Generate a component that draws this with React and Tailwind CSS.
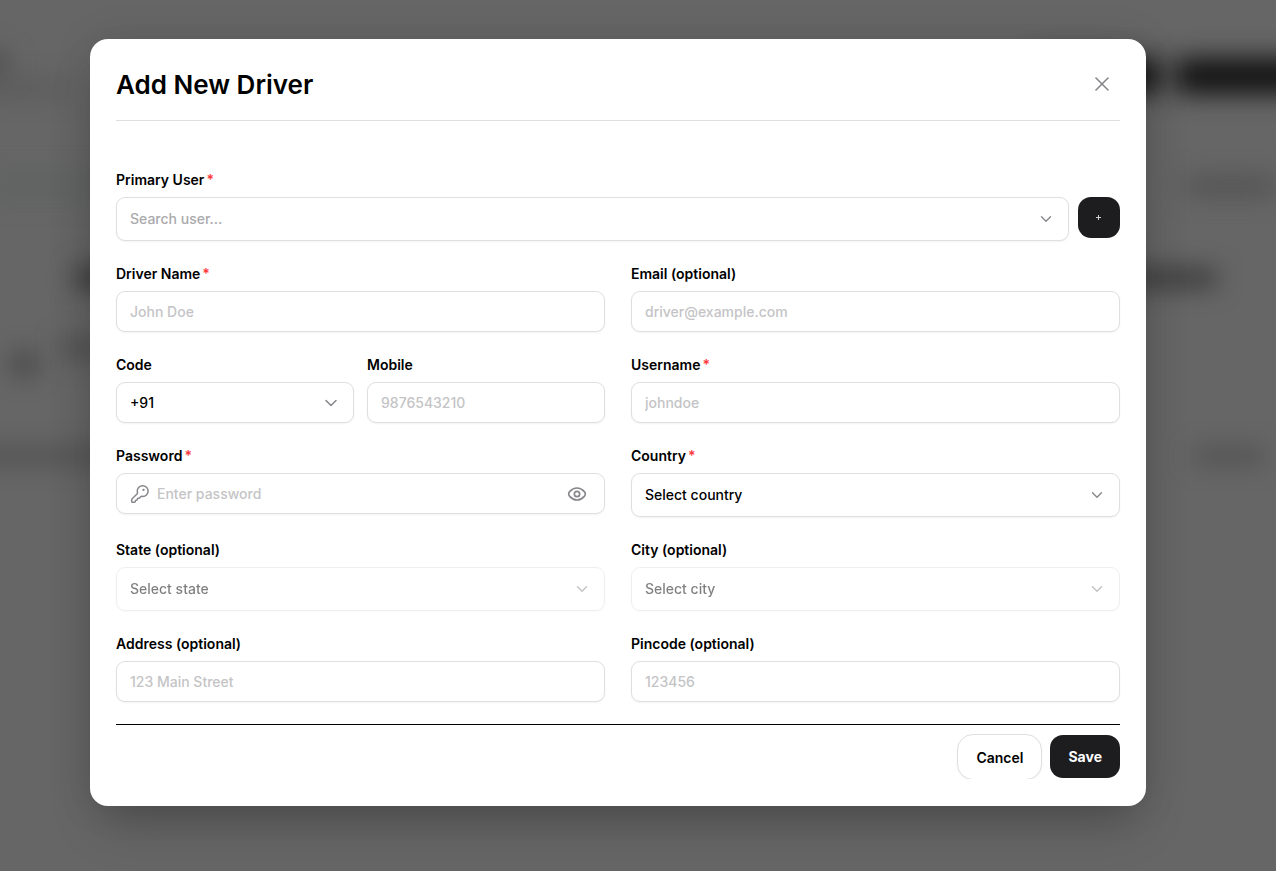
import React, { useState } from 'react';
import { ChevronDown, X } from 'lucide-react';

const inputClass =
  'w-full h-[41px] px-[13px] rounded-[9px] border border-[#dfdfe1] bg-white text-[14px] font-medium text-black placeholder:text-[#c4c4c6] shadow-[0_1px_2px_rgba(0,0,0,0.05)] outline-none';

const KeyIcon = () => (
  <svg viewBox="0 0 24 24" fill="none" stroke="currentColor" strokeWidth="1.8" strokeLinecap="round" strokeLinejoin="round" className="w-5 h-5">
    <path d="M15.2 15a6.500 6.500 0 1 0-6.500-6.500c0 .7.1 1.200.300 1.800.2.600.1 1-.300 1.400L2.900 17.500c-.6.6-.9 1.200-.9 2V21c0 .6.400 1 1 1h2.200c.7 0 1.200-.5 1.200-1.200v-.3c0-.5.4-.9.9-.9h.3c.7 0 1.200-.5 1.200-1.200v-.3c0-.5.4-.9.9-.9h.4c.5 0 .9-.2 1.200-.5l1.500-1.500c.4-.4.8-.5 1.300-.4.3.1.7.2 1.100.2Z" />
    <circle cx="16.200" cy="7" r="1.400" fill="currentColor" stroke="none" />
  </svg>
);

const EyeIcon = () => (
  <svg viewBox="0 0 24 24" fill="none" stroke="currentColor" strokeWidth="2" strokeLinejoin="round" className="w-5 h-5">
    <path d="M2 12c0-1.400.5-2.100 1.500-3.200C5.300 6.800 8.200 4.800 12 4.800s6.700 2 8.500 4c1 1.100 1.500 1.800 1.500 3.200s-.5 2.100-1.500 3.200c-1.800 2-4.700 4-8.500 4s-6.700-2-8.500-4C2.500 14.100 2 13.400 2 12Z" />
    <circle cx="12" cy="12" r="3.200" />
  </svg>
);

const Field = ({ id, label, required, children }) => (
  <div>
    <label htmlFor={id} className="flex gap-0.5 mb-[7px] text-[14px] leading-5 font-semibold text-black">
      {label}
      {required && <span className="text-[#ff383c]">*</span>}
    </label>
    {children}
  </div>
);

const TextInput = ({ id, ...props }) => <input id={id} type="text" className={inputClass} {...props} />;

const Select = ({ id, options, disabled, compact }) => (
  <div className={`relative ${disabled ? 'opacity-50' : ''}`}>
    <select
      id={id}
      disabled={disabled}
      className={`w-full px-[13px] appearance-none rounded-[9px] border border-[#dfdfe1] bg-white text-[14px] font-medium text-black opacity-100 shadow-[0_1px_2px_rgba(0,0,0,0.05)] outline-none ${compact ? 'h-[41px]' : 'h-[44px] pb-0.5'}`}
    >
      {options.map((option) => (
        <option key={option}>{option}</option>
      ))}
    </select>
    <span className="absolute inset-y-0 right-[13px] w-5 flex items-center justify-center text-[#86868b] pointer-events-none">
      <ChevronDown className={compact ? 'w-5 h-5' : 'w-[18px] h-[18px]'} strokeWidth={1.8} />
    </span>
  </div>
);

// Blurred page content that shows through the overlay
const Backdrop = () => (
  <div aria-hidden="true" className="absolute inset-0 overflow-hidden bg-[#666666]">
    <div className="absolute -left-10 top-[52px] w-[46px] h-6 bg-[#4c4c4c] blur-[13px]" />
    <div className="absolute -left-5 top-[84px] w-[90px] h-2 bg-[#505050] blur-[13px]" />
    <div className="absolute right-[114px] top-[58px] w-[130px] h-[36px] rounded-xl bg-[#121212] blur-[13px]" />
    <div className="absolute -right-10 top-[58px] w-[142px] h-[36px] rounded-xl bg-[#121212] blur-[13px]" />
    <div className="absolute -left-5 top-[176px] w-[120px] h-5 bg-[#5f6161] blur-[13px]" />
    <div className="absolute right-0 top-[178px] w-[90px] h-4 bg-[#4e4e4e] blur-[13px]" />
    <div className="absolute left-[76px] top-[268px] w-[60px] h-5 bg-[#303030] blur-[13px]" />
    <div className="absolute right-[60px] top-[270px] w-[90px] h-4 bg-[#303030] blur-[13px]" />
    <div className="absolute left-[14px] top-[354px] w-5 h-5 bg-[#383838] blur-[13px]" />
    <div className="absolute left-[62px] top-[340px] w-[40px] h-4 bg-[#484848] blur-[13px]" />
    <div className="absolute -left-5 top-[450px] w-[130px] h-3 bg-[#484848] blur-[13px]" />
    <div className="absolute right-[12px] top-[450px] w-[70px] h-3 bg-[#484848] blur-[13px]" />
  </div>
);

const App = () => {
  const [showPassword, setShowPassword] = useState(false);

  return (
    <div className="relative min-h-screen pt-[39px] pb-[65px] pl-[90px] pr-[130px] font-['Inter',sans-serif]">
      <Backdrop />

      <div role="dialog" aria-labelledby="dialog-title" className="relative w-full p-[26px] rounded-[18px] bg-white shadow-[0_25px_50px_-12px_rgba(0,0,0,0.25),0_0_40px_rgba(0,0,0,0.1)]">
        {/* Header */}
        <div className="flex items-start justify-between pb-4 border-b border-[#dfdfe1]">
          <h2 id="dialog-title" className="text-[26px] leading-[39px] font-semibold text-black">Add New Driver</h2>
          <button type="button" aria-label="Close" className="w-9 h-[38px] flex items-center justify-center text-[#86868b]">
            <X className="w-6 h-6" strokeWidth={1.6} />
          </button>
        </div>

        <form onSubmit={(e) => e.preventDefault()} className="pb-px">
          <div className="grid grid-cols-2 gap-x-[26px] gap-y-[23px] pt-[49px] pb-[22px]">
            {/* Primary User */}
            <div className="col-span-2">
              <Field id="user" label="Primary User" required>
                <div className="flex items-start gap-[9px]">
                  <div className="relative flex-1">
                    <input
                      id="user"
                      type="text"
                      placeholder="Search user..."
                      className="w-full h-[44px] px-[13px] pb-0.5 rounded-[9px] border border-[#dfdfe1] bg-white text-[14px] font-medium text-black placeholder:text-[#aaaaad] shadow-[0_1px_2px_rgba(0,0,0,0.05)] outline-none"
                    />
                    <span className="absolute inset-y-0 right-[13px] w-5 flex items-center justify-center text-[#86868b] pointer-events-none">
                      <ChevronDown className="w-[18px] h-[18px]" strokeWidth={1.8} />
                    </span>
                  </div>
                  <button type="button" aria-label="Add user" className="w-[42px] h-[41px] flex items-center justify-center rounded-[13px] bg-[#1d1d1f] text-[#d0d0d0]">
                    <svg viewBox="0 0 6 7" stroke="currentColor" strokeWidth="1" className="w-[6px] h-[7px]">
                      <path d="M2.500 1v5M0 3.500h5" />
                    </svg>
                  </button>
                </div>
              </Field>
            </div>

            <Field id="name" label="Driver Name" required>
              <TextInput id="name" placeholder="John Doe" />
            </Field>
            <Field id="email" label="Email (optional)">
              <TextInput id="email" type="email" placeholder="driver@example.com" />
            </Field>

            <div className="grid grid-cols-2 gap-[13px]">
              <Field id="code" label="Code">
                <Select id="code" options={['+91']} compact />
              </Field>
              <Field id="mobile" label="Mobile">
                <TextInput id="mobile" type="tel" placeholder="9876543210" />
              </Field>
            </div>
            <Field id="username" label="Username" required>
              <TextInput id="username" placeholder="johndoe" />
            </Field>

            <Field id="password" label="Password" required>
              <div className="h-[41px] px-[13px] flex items-center gap-[7px] rounded-[9px] border border-[#dfdfe1] bg-white text-[#86868b] shadow-[0_1px_2px_rgba(0,0,0,0.05)]">
                <KeyIcon />
                <input
                  id="password"
                  type={showPassword ? 'text' : 'password'}
                  placeholder="Enter password"
                  className="flex-1 min-w-0 text-[14px] font-medium text-black placeholder:text-[#c4c4c6] outline-none"
                />
                <button type="button" aria-label="Show password" onClick={() => setShowPassword(!showPassword)} className="mr-1">
                  <EyeIcon />
                </button>
              </div>
            </Field>
            <Field id="country" label="Country" required>
              <Select id="country" options={['Select country']} />
            </Field>

            <Field id="state" label="State (optional)">
              <Select id="state" options={['Select state']} disabled />
            </Field>
            <Field id="city" label="City (optional)">
              <Select id="city" options={['Select city']} disabled />
            </Field>

            <Field id="address" label="Address (optional)">
              <TextInput id="address" placeholder="123 Main Street" />
            </Field>
            <Field id="pincode" label="Pincode (optional)">
              <TextInput id="pincode" placeholder="123456" />
            </Field>
          </div>

          {/* Actions */}
          <div className="h-[55px] pt-[9px] flex items-start justify-end gap-2 border-t border-black overflow-hidden">
            <button type="button" className="h-[46px] px-[18px] rounded-[16px] border border-[#dfdfe1] bg-white text-[14px] font-semibold text-black shadow-[0_1px_2px_rgba(0,0,0,0.05)]">
              Cancel
            </button>
            <button type="submit" className="h-[43px] mt-px px-[18px] rounded-[13px] bg-[#1d1d1f] text-[14px] font-bold text-white">
              Save
            </button>
          </div>
        </form>
      </div>
    </div>
  );
};

export default App;
